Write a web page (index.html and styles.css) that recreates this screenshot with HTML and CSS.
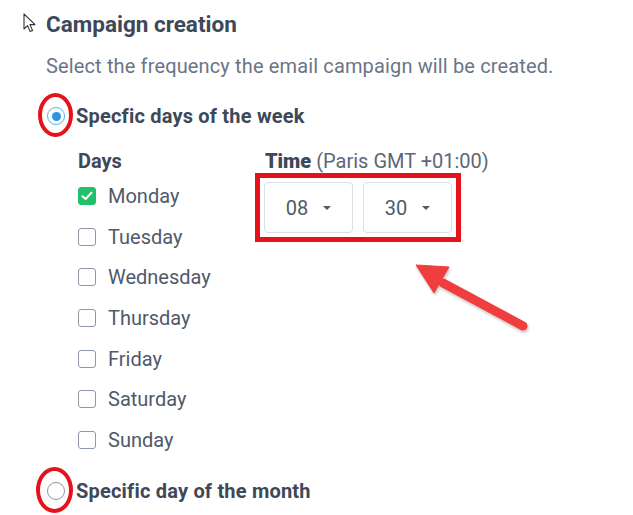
FILE: index.html
```html
<!DOCTYPE html>
<html lang="en">
<head>
<meta charset="utf-8">
<title>Campaign creation</title>
<link rel="stylesheet" href="styles.css">
</head>
<body>
<div class="page">
  <svg class="cursor" width="14" height="20" viewBox="0 0 14 20"><path d="M1 1 L1 16 L4.6 12.6 L7.2 18.6 L9.6 17.6 L7 11.6 L12 11.6 Z" fill="#fff" stroke="#333" stroke-width="1.1" stroke-linejoin="round"/></svg>
  <h2 class="title">Campaign creation</h2>
  <p class="subtitle">Select the frequency the email campaign will be created.</p>

  <div class="option">
    <span class="radio radio-on"><span class="dot"></span></span>
    <span class="option-label">Specfic days of the week</span>
    <span class="ring"></span>
  </div>

  <div class="columns">
    <div class="days">
      <div class="col-head">Days</div>
      <ul class="day-list">
        <li class="day"><span class="box box-on"><svg width="12" height="10" viewBox="0 0 12 10"><path d="M1.5 5.2 L4.6 8 L10.5 1.8" fill="none" stroke="#fff" stroke-width="2" stroke-linecap="round" stroke-linejoin="round"/></svg></span>Monday</li>
        <li class="day"><span class="box"></span>Tuesday</li>
        <li class="day"><span class="box"></span>Wednesday</li>
        <li class="day"><span class="box"></span>Thursday</li>
        <li class="day"><span class="box"></span>Friday</li>
        <li class="day"><span class="box"></span>Saturday</li>
        <li class="day"><span class="box"></span>Sunday</li>
      </ul>
    </div>
    <div class="time">
      <div class="col-head"><b>Time</b> <span class="tz">(Paris GMT +01:00)</span></div>
      <div class="selects">
        <div class="select">08 <span class="caret"></span></div>
        <div class="select">30 <span class="caret"></span></div>
      </div>
    </div>
  </div>

  <div class="option option-2">
    <span class="radio"></span>
    <span class="option-label">Specific day of the month</span>
    <span class="ring ring-2"></span>
  </div>

  <svg class="arrow" width="140" height="90" viewBox="0 0 140 90">
    <defs><filter id="sh" x="-20%" y="-20%" width="140%" height="140%"><feDropShadow dx="1" dy="2" stdDeviation="1.5" flood-color="#000" flood-opacity="0.25"/></filter></defs>
    <g filter="url(#sh)" fill="#f03c3e" stroke="#f03c3e">
      <line x1="110" y1="63" x2="30" y2="20" stroke-width="9" stroke-linecap="round"/>
      <path d="M3 2 L36 4 L21 30 Z" stroke-width="1" stroke-linejoin="round"/>
    </g>
  </svg>
</div>
</body>
</html>
```
FILE: styles.css
```css
* { box-sizing: border-box; }
html, body { margin: 0; padding: 0; background: #fff; }
body { font-family: Roboto, "Noto Sans", Arial, sans-serif; }
.page {
  position: relative;
  width: 633px;
  height: 515px;
  padding-left: 46px;
  overflow: hidden;
}
.cursor { position: absolute; left: 23px; top: 13px; }
.title {
  margin: 0;
  padding-top: 10px;
  font-size: 22.5px;
  line-height: 28px;
  font-weight: 700;
  color: #3d4859;
}
.subtitle {
  margin: 16px 0 0;
  font-size: 20px;
  line-height: 24px;
  letter-spacing: 0.14px;
  color: #6a7587;
}
.option {
  position: relative;
  display: flex;
  align-items: center;
  gap: 11px;
  margin-top: 26px;
  height: 24px;
  padding-left: 1px;
}
.option-2 { margin-top: 19px; }
.radio {
  width: 18px;
  height: 18px;
  border-radius: 50%;
  border: 1.5px solid #8c96a4;
  display: flex;
  align-items: center;
  justify-content: center;
  flex: none;
}
.radio-on { border-color: #5aaeea; }
.dot { width: 9px; height: 9px; border-radius: 50%; background: #2b95e3; }
.option-label {
  font-size: 20px;
  font-weight: 700;
  color: #3d4859;
  letter-spacing: 0.2px;
}
.ring {
  position: absolute;
  left: -8px;
  top: -11px;
  width: 35px;
  height: 44px;
  border: 4px solid #e5121c;
  border-radius: 50%;
}
.ring-2 { left: -10px; top: -12px; width: 37px; height: 46px; }
.columns {
  display: grid;
  grid-template-columns: 187px auto;
  margin-top: 21px;
  padding-left: 32px;
}
.col-head {
  font-size: 20px;
  line-height: 24px;
  font-weight: 700;
  color: #3d4859;
}
.tz { font-weight: 400; color: #5c6778; }
.day-list { list-style: none; margin: 3px 0 0; padding: 0; }
.day {
  height: 40.6px;
  display: flex;
  align-items: center;
  gap: 12px;
  font-size: 20px;
  color: #4f5a6b;
}
.box {
  width: 18px;
  height: 18px;
  border: 1.5px solid #8e97a6;
  border-radius: 3px;
  flex: none;
  display: flex;
  align-items: center;
  justify-content: center;
}
.box-on { background: #21c16c; border-color: #21c16c; }
.selects {
  display: flex;
  gap: 10px;
  margin-top: 9px;
  margin-left: -1px;
  width: max-content;
  outline: 5px solid #e5121c;
  outline-offset: 4px;
}
.select {
  width: 89px;
  height: 51px;
  border: 1px solid #d9dfe7;
  border-radius: 4px;
  display: flex;
  align-items: center;
  justify-content: center;
  gap: 9px;
  font-size: 20px;
  color: #4f5a6b;
}
.caret {
  width: 0; height: 0;
  border-left: 4px solid transparent;
  border-right: 4px solid transparent;
  border-top: 4px solid #4f5a6b;
  margin-left: 6px;
}
.arrow { position: absolute; left: 413px; top: 263px; }
```
